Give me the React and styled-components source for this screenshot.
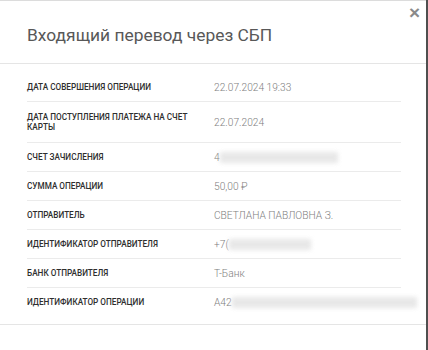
import React from 'react';
import styled, { createGlobalStyle } from 'styled-components';

const GlobalStyle = createGlobalStyle`
  html, body {
    margin: 0;
    padding: 0;
    background: #4f4f4f;
    font-family: Roboto, "Liberation Sans", Arial, sans-serif;
  }
`;

const Modal = styled.div`
  width: 426px;
  min-height: 360px;
  background: #fff;
  border-top: 1px solid #dcdcdc;
  box-sizing: border-box;
`;

const Header = styled.div`
  position: relative;
  padding: 24px 27px 18px 27px;
  border-bottom: 1px solid #e5e5e5;
`;

const Title = styled.h4`
  margin: 0;
  font-size: 17.4px;
  font-weight: 400;
  line-height: 20px;
  color: #585858;
`;

const Close = styled.button`
  position: absolute;
  top: 3px;
  right: 6px;
  border: 0;
  background: none;
  padding: 0;
  color: #8a8a8a;
  font-size: 19px;
  font-weight: 700;
  line-height: 18px;
  cursor: pointer;
  font-family: "Liberation Sans", Arial, sans-serif;
`;

const Body = styled.div`
  padding: 9px 25px 8px 27px;
  border-bottom: 1px solid #e5e5e5;
`;

const Row = styled.div`
  display: grid;
  grid-template-columns: 187px 1fr;
  align-items: center;
  min-height: 28px;
  padding: ${(p) => (p.$tall ? '6px 0 6px' : '0')};
  border-bottom: ${(p) => (p.$last ? 'none' : '1px solid #ebebeb')};
`;

const Label = styled.div`
  font-size: 8.2px;
  font-weight: 500;
  line-height: 10px;
  color: #2e2e2e;
  text-transform: uppercase;
  padding-right: 12px;
`;

const Value = styled.div`
  font-size: 10.2px;
  font-weight: 300;
  color: #808080;
  white-space: nowrap;
  display: flex;
  align-items: center;
`;

const Hidden = styled.span`
  display: inline-block;
  width: ${(p) => p.$w}px;
  height: 11px;
  background: #dedede;
  filter: blur(2px);
  opacity: 0.7;
`;

const Footer = styled.div`
  height: 30px;
`;

const rows = [
  { label: 'Дата совершения операции', value: '22.07.2024 19:33' },
  { label: 'Дата поступления платежа на счет карты', value: '22.07.2024', tall: true },
  { label: 'Счет зачисления', value: '4', hidden: 118 },
  { label: 'Сумма операции', value: '50,00 ₽' },
  { label: 'Отправитель', value: 'СВЕТЛАНА ПАВЛОВНА З.' },
  { label: 'Идентификатор отправителя', value: '+7(', hidden: 82 },
  { label: 'Банк отправителя', value: 'Т-Банк' },
  { label: 'Идентификатор операции', value: 'A42', hidden: 185 },
];

export default function App() {
  return (
    <>
      <GlobalStyle />
      <Modal>
        <Header>
          <Title>Входящий перевод через СБП</Title>
          <Close aria-label="Закрыть">×</Close>
        </Header>
        <Body>
          {rows.map((r, i) => (
            <Row key={i} $tall={r.tall} $last={i === rows.length - 1}>
              <Label>{r.label}</Label>
              <Value>
                {r.value}
                {r.hidden && <Hidden $w={r.hidden} />}
              </Value>
            </Row>
          ))}
        </Body>
        <Footer />
      </Modal>
    </>
  );
}
